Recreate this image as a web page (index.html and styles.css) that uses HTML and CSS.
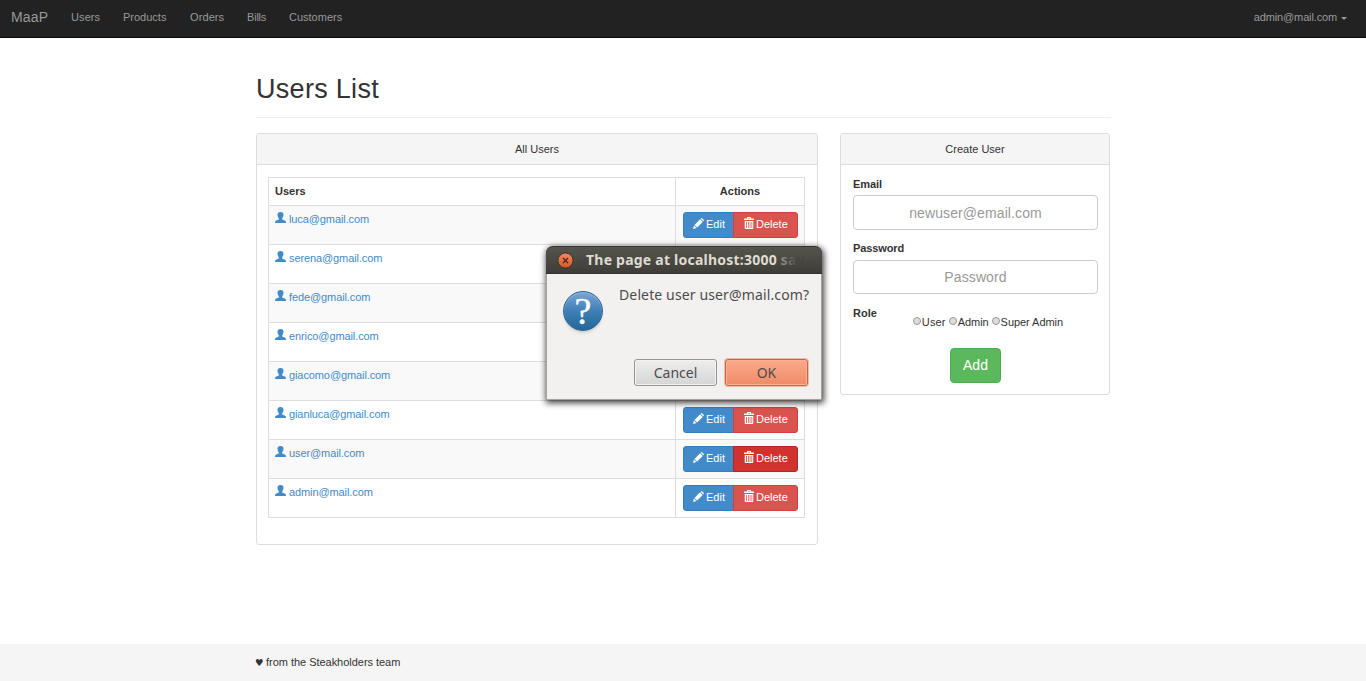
FILE: index.html
```html
<!DOCTYPE html>
<html lang="en">
<head>
<meta charset="utf-8">
<title>MaaP</title>
<link rel="stylesheet" href="styles.css">
</head>
<body>
<svg class="defs" width="0" height="0">
  <symbol id="user" viewBox="0 0 11 11"><path d="M5.500 0C7.700 0 8.600 1.200 8.500 3.100 8.400 4.600 7.900 5.500 7.200 6.200V7.400L10.200 8.700Q11 9.200 11 11H0Q0 9.200.8 8.700L3.800 7.400V6.200C3.100 5.500 2.600 4.600 2.500 3.100 2.400 1.200 3.300 0 5.500 0Z"/></symbol>
  <symbol id="pencil" viewBox="0 0 11 11"><path d="M0 11 .9 7.500 3.500 10.100ZM1.500 6.900 7.100 1.300 9.700 3.900 4.100 9.500ZM7.700 .7 8.200.2Q8.600-.1 9 .2L10.800 2Q11.100 2.400 10.800 2.800L10.300 3.300Z"/></symbol>
  <symbol id="trash" viewBox="0 0 10 12"><path fill-rule="evenodd" d="M3 1.500V.5Q3 0 3.500 0H6.500Q7 0 7 .5V1.500H9.500Q10 1.500 10 2V3H0V2Q0 1.500.5 1.500ZM4 1V1.500H6V1ZM.7 4H9.300V11Q9.300 12 8.300 12H1.700Q.7 12 .7 11ZM2 5V11H2.800V5ZM4 5V11H4.700V5ZM5.700 5V11H6.400V5ZM7.500 5V11H8.200V5Z"/></symbol>
</svg>
<nav class="navbar">
  <a class="brand">MaaP</a>
  <a class="n1">Users</a><a class="n2">Products</a><a class="n3">Orders</a><a class="n4">Bills</a><a class="n5">Customers</a>
  <a class="account">admin@mail.com<i class="caret"></i></a>
</nav>
<main class="container">
  <h1>Users List</h1>
  <div class="columns">
    <section class="panel list-panel">
      <header>All Users</header>
      <table>
        <thead><tr><th>Users</th><th class="actions">Actions</th></tr></thead>
        <tbody>
          <tr><td><a><svg><use href="#user"/></svg>luca@gmail.com</a></td><td class="actions"><div class="group"><button class="edit"><svg><use href="#pencil"/></svg>Edit</button><button class="delete"><svg><use href="#trash"/></svg>Delete</button></div></td></tr>
          <tr><td><a><svg><use href="#user"/></svg>serena@gmail.com</a></td><td class="actions"><div class="group"><button class="edit"><svg><use href="#pencil"/></svg>Edit</button><button class="delete"><svg><use href="#trash"/></svg>Delete</button></div></td></tr>
          <tr><td><a><svg><use href="#user"/></svg>fede@gmail.com</a></td><td class="actions"><div class="group"><button class="edit"><svg><use href="#pencil"/></svg>Edit</button><button class="delete"><svg><use href="#trash"/></svg>Delete</button></div></td></tr>
          <tr><td><a><svg><use href="#user"/></svg>enrico@gmail.com</a></td><td class="actions"><div class="group"><button class="edit"><svg><use href="#pencil"/></svg>Edit</button><button class="delete"><svg><use href="#trash"/></svg>Delete</button></div></td></tr>
          <tr><td><a><svg><use href="#user"/></svg>giacomo@gmail.com</a></td><td class="actions"><div class="group"><button class="edit"><svg><use href="#pencil"/></svg>Edit</button><button class="delete"><svg><use href="#trash"/></svg>Delete</button></div></td></tr>
          <tr><td><a><svg><use href="#user"/></svg>gianluca@gmail.com</a></td><td class="actions"><div class="group"><button class="edit"><svg><use href="#pencil"/></svg>Edit</button><button class="delete"><svg><use href="#trash"/></svg>Delete</button></div></td></tr>
          <tr><td><a><svg><use href="#user"/></svg>user@mail.com</a></td><td class="actions"><div class="group"><button class="edit"><svg><use href="#pencil"/></svg>Edit</button><button class="delete active"><svg><use href="#trash"/></svg>Delete</button></div></td></tr>
          <tr><td><a><svg><use href="#user"/></svg>admin@mail.com</a></td><td class="actions"><div class="group"><button class="edit"><svg><use href="#pencil"/></svg>Edit</button><button class="delete"><svg><use href="#trash"/></svg>Delete</button></div></td></tr>
        </tbody>
      </table>
    </section>
    <section class="panel form-panel">
      <header>Create User</header>
      <form>
        <label class="field-label">Email</label>
        <input class="field email" type="text" placeholder="newuser@email.com">
        <label class="field-label tight">Password</label>
        <input class="field password" type="password" placeholder="Password">
        <div class="role"><b>Role</b><div class="radios"><label><i></i>User</label><label><i></i>Admin</label><label><i></i>Super Admin</label></div></div>
        <button type="button" class="add">Add</button>
      </form>
    </section>
  </div>
</main>
<footer class="footer"><span class="heart">♥</span><span>from the Steakholders team</span></footer>
<div class="dialog">
  <div class="titlebar">
    <svg class="close" viewBox="0 0 17 17"><defs><linearGradient id="og" x2="0" y2="1"><stop stop-color="#f58a63"/><stop offset="1" stop-color="#e2501f"/></linearGradient></defs><circle cx="8.500" cy="8.500" r="7.600" fill="url(#og)" stroke="#34332f"/><path d="M6 6 11 11M11 6 6 11" stroke="#3b2a22" stroke-width="1.200"/></svg>
    <span class="title">The page at localhost:3000 <span class="fade">say</span></span>
  </div>
  <div class="message">
    <div class="question"><span>?</span></div>
    <p>Delete user user@mail.com?</p>
  </div>
  <div class="choices"><button class="cancel">Cancel</button><button class="ok">OK</button></div>
</div>
</body>
</html>
```
FILE: styles.css
```css
* { box-sizing: border-box; }
body {
  margin: 0;
  height: 681px;
  overflow: hidden;
  display: flex;
  flex-direction: column;
  background: #fff;
  color: #333;
  font: 11px/15px "Liberation Sans", Arial, sans-serif;
}
button { font: inherit; margin: 0; }
.defs { position: absolute; }

.navbar {
  flex: none;
  height: 38px;
  display: flex;
  padding: 10px 19px 0 11px;
  background: #222;
  border-bottom: 1px solid #080808;
  color: #999;
}
.brand { width: 60px; font-size: 14px; letter-spacing: .2px; }
.n1 { width: 52px; letter-spacing: .1px; }
.n2 { width: 67px; }
.n3 { width: 57px; letter-spacing: .1px; }
.n4 { width: 42px; letter-spacing: -.2px; }
.account { margin-left: auto; display: flex; letter-spacing: -.14px; }
.caret {
  margin: 7px 0 0 4px;
  width: 0;
  height: 0;
  border: 3px solid transparent;
  border-top-color: #999;
  border-bottom: 0;
}

.container { flex: 1; width: 855px; margin-left: 256px; }
h1 {
  margin: 0 0 15px;
  height: 80px;
  padding-top: 35px;
  border-bottom: 1px solid #eee;
  font-size: 27px;
  letter-spacing: .3px;
  line-height: 32px;
  font-weight: 400;
}
.columns { display: flex; gap: 22px; align-items: flex-start; }
.panel { border: 1px solid #ddd; border-radius: 3px; background: #fff; }
.panel header {
  height: 31px;
  line-height: 30px;
  text-align: center;
  background: #f5f5f5;
  border-bottom: 1px solid #ddd;
  border-radius: 2px 2px 0 0;
}
.list-panel { width: 562px; height: 412px; }
.form-panel { width: 270px; height: 262px; }

table {
  margin: 12px 0 0 11px;
  width: 537px;
  border-collapse: collapse;
  table-layout: fixed;
}
th, td { border: 1px solid #ddd; padding: 0 6px; text-align: left; vertical-align: top; }
th { height: 28px; line-height: 27px; }
td { height: 39px; padding-top: 6px; }
th.actions { width: 129px; text-align: center; }
tbody tr:nth-child(odd) { background: #f9f9f9; }
td a { display: flex; color: #428bca; letter-spacing: -.1px; }
td a svg { width: 11px; height: 11px; margin-right: 3px; fill: #428bca; }
td.actions { padding-left: 7px; }
.group { display: flex; }
.group button {
  display: flex;
  align-items: center;
  height: 26px;
  padding: 0 0 2px 9px;
  border: 1px solid #357ebd;
  color: #fff;
  line-height: 15px;
}
.group svg { width: 11px; height: 11px; margin: 0 2px 2px 0; fill: #fff; }
.edit { width: 51px; background: #428bca; border-radius: 3px 0 0 3px; }
.group .delete {
  width: 65px;
  margin-left: -1px;
  padding-left: 10px;
  background: #d9534f;
  border-color: #d43f3a;
  border-radius: 0 3px 3px 0;
}
.group .delete svg { width: 10px; height: 12px; }
.group .delete.active { background: #d2322d; border-color: #ac2925; }

form { display: flex; flex-direction: column; padding: 12px 11px 0 12px; }
.field-label { height: 18px; font-weight: 700; letter-spacing: -.05px; }
.tight { letter-spacing: -.1px; }
.field {
  height: 35px;
  padding: 0 10px;
  border: 1px solid #ccc;
  border-radius: 4px;
  text-align: center;
  font: 14px "Liberation Sans", Arial, sans-serif;
  letter-spacing: .1px;
}
.field::placeholder { color: #999; }
.email { margin-bottom: 11px; }
.password { height: 34px; margin: 1px 0 12px; }
.role { display: flex; height: 42px; }
.radios { display: flex; gap: 3px; margin: 9px 0 0 36px; }
.radios label { display: flex; letter-spacing: -.05px; }
.radios label:first-child { letter-spacing: .15px; }
.radios i {
  width: 8px;
  height: 8px;
  margin: 2px 1px 0 0;
  border: 1px solid #999;
  border-radius: 50%;
  background: #ddd;
}
.add {
  align-self: center;
  width: 51px;
  height: 35px;
  padding: 0;
  background: #5cb85c;
  border: 1px solid #4cae4c;
  border-radius: 4px;
  color: #fff;
  font-size: 14px;
}

.footer {
  flex: none;
  display: flex;
  height: 37px;
  padding: 11px 0 0 255px;
  background: #f5f5f5;
  letter-spacing: -.03px;
}
.heart { width: 11px; font-family: "DejaVu Sans", sans-serif; font-size: 9.500px; }

.dialog {
  position: absolute;
  left: 546px;
  top: 246px;
  width: 276px;
  height: 154px;
  background: #f2f1f0;
  border: 1px solid #a5a19b;
  border-top: 0;
  border-radius: 7px 7px 0 0;
  box-shadow: 1px 2px 6px 1px rgba(0, 0, 0, .75);
  color: #4c4c4c;
  font-family: "Noto Sans", sans-serif;
  font-size: 14px;
}
.titlebar {
  height: 28px;
  margin: 0 -1px;
  display: flex;
  align-items: center;
  padding-left: 11px;
  border-radius: 7px 7px 0 0;
  border-top: 1px solid #33322e;
  border-bottom: 1px solid #33322e;
  background: linear-gradient(#55544c, #3e3d38);
  color: #dfdbd2;
}
.close { width: 17px; height: 17px; margin-right: 12px; }
.title { font-weight: 700; white-space: pre; letter-spacing: .23px; padding-bottom: 2px; }
.fade {
  background: linear-gradient(90deg, #99968f, #46453f 70%);
  -webkit-background-clip: text;
  background-clip: text;
  color: transparent;
}
.message { display: flex; height: 85px; padding: 0 0 0 16px; }
.question {
  width: 40px;
  height: 40px;
  margin-top: 17px;
  border: 1px solid #2c6592;
  border-radius: 50%;
  background: linear-gradient(#7ba5d8, #3f7fb5 50%, #246797);
  box-shadow: 0 3px 3px -1px #d0cfcd, inset 0 1px 1px #94b6df;
  color: #fff;
  text-align: center;
  font: 38px/38px "Liberation Serif", serif;
  -webkit-text-stroke: .4px #fff;
}
.message p { margin: 13px 0 0 16px; line-height: 16px; white-space: nowrap; letter-spacing: .13px; }
.choices { display: flex; gap: 8px; padding-left: 87px; }
.choices button {
  width: 83px;
  height: 27px;
  padding: 0;
  color: #4c4c4c;
  border: 1px solid #979593;
  border-radius: 3px;
  background: linear-gradient(#eee, #d5d5d5);
  box-shadow: inset 0 0 0 1px #f3f3f3;
}
.choices .ok {
  border-color: #b9694f;
  background: linear-gradient(#fbaa8c, #f08b66);
  box-shadow: inset 0 0 0 1px #fbb193, 0 0 0 1px #f5b8a0;
}
```
